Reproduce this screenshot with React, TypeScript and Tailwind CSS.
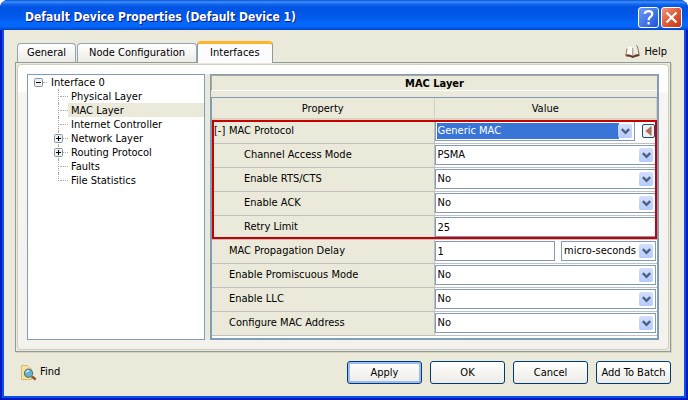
import { useState, type ReactNode } from "react";

function Chevron() {
  return (
    <span className="pointer-events-none absolute top-0.5 right-0.5 bottom-0.5 flex w-3.5 items-center justify-center rounded-xs bg-gradient-to-b from-[#d2dffd] to-[#b5cbfb]">
      <svg width="9" height="7" viewBox="0 0 9 7" aria-hidden="true">
        <path d="M0.8 1.2 L4.5 4.8 L8.2 1.2" fill="none" stroke="#4d6185" strokeWidth="2.4" />
      </svg>
    </span>
  );
}

type DropDownProps = { id?: string; label?: string; options: string[]; selected?: boolean; width?: string };

function DropDown({ id, label, options, selected = false, width = "flex-1" }: DropDownProps) {
  return (
    <span className={`relative flex h-5 border border-[#7f9db9] bg-white p-px ${width}`}>
      <select
        id={id}
        aria-label={label}
        className={`mr-3.5 min-w-0 flex-1 appearance-none pl-px leading-4 outline-none ${selected ? "bg-[#3875d7] text-white" : "bg-white"}`}
      >
        {options.map((o) => (
          <option key={o}>{o}</option>
        ))}
      </select>
      <Chevron />
    </span>
  );
}

function TextBox({ id, value, width = "flex-1" }: { id: string; value: string; width?: string }) {
  return (
    <input
      id={id}
      defaultValue={value}
      className={`h-5 min-w-0 border border-[#7f9db9] bg-white px-0.5 outline-none ${width}`}
    />
  );
}

type RowProps = { id: string; label: string; indent?: string; toggle?: boolean; children: ReactNode };

function Row({ id, label, indent = "pl-[17px]", toggle = false, children }: RowProps) {
  return (
    <tr className="h-6">
      <th
        scope="row"
        className={`border-r border-b border-[#c0c0c0] bg-[#ebe9d9] p-0 text-left font-normal ${toggle ? "pl-0.5" : indent}`}
      >
        <span className="flex">
          {toggle && (
            <button type="button" aria-label="Collapse MAC Protocol" className="w-[15px] text-left">
              [-]
            </button>
          )}
          <label htmlFor={id}>{label}</label>
        </span>
      </th>
      <td className="border-b border-[#c0c0c0] bg-white p-0">
        <div className="flex h-[23px] items-start pt-px pr-px">{children}</div>
      </td>
    </tr>
  );
}

function Expander({ open }: { open: boolean }) {
  return (
    <svg width="9" height="9" viewBox="0 0 9 9" className="relative shrink-0" aria-hidden="true">
      <rect x="0.5" y="0.5" width="8" height="8" rx="1" fill="#f1efe6" stroke="#7898b5" />
      <path d={open ? "M2 4.5h5" : "M2 4.5h5M4.5 2v5"} stroke="#000" />
    </svg>
  );
}

function TreeItem({ name, expandable = false, active = false, last = false }: { name: string; expandable?: boolean; active?: boolean; last?: boolean }) {
  return (
    <li className="flex h-3.5 items-center">
      <span className="relative flex h-3.5 w-3.5 shrink-0 items-center">
        <span className={`absolute top-0 left-1 border-l border-dotted border-[#aca899] ${last ? "h-2" : "h-3.5"}`} />
        <span className="absolute top-[7px] right-0 left-1.5 border-t border-dotted border-[#aca899]" />
        {expandable && <Expander open={false} />}
      </span>
      <button type="button" className={`h-3.5 flex-1 pt-0.5 pl-[3px] text-left leading-3 ${active ? "bg-[#ebe9d9]" : ""}`}>
        {name}
      </button>
    </li>
  );
}

function Tree() {
  return (
    <nav aria-label="Interface tree" className="w-[178px] shrink-0 border border-[#7f9db9] bg-white">
      <div className="flex h-3.5 items-center pl-1.5">
        <Expander open />
        <span className="w-1 border-t border-dotted border-[#aca899]" />
        <button type="button" className="h-3.5 pt-0.5 pl-1 leading-3">Interface 0</button>
      </div>
      <ul className="pl-[26px]">
        <TreeItem name="Physical Layer" />
        <TreeItem name="MAC Layer" active />
        <TreeItem name="Internet Controller" />
        <TreeItem name="Network Layer" expandable />
        <TreeItem name="Routing Protocol" expandable />
        <TreeItem name="Faults" />
        <TreeItem name="File Statistics" last />
      </ul>
    </nav>
  );
}

const columns = (
  <colgroup>
    <col className="w-1/2" />
    <col className="w-1/2" />
  </colgroup>
);

function Properties() {
  return (
    <section className="min-w-0 flex-1 border border-r-2 border-b-2 border-[#7f9db9] bg-white">
      <h2 className="h-4 border-t border-b border-l border-t-[#aca899] border-b-white border-l-[#aca899] bg-[#ebe9d9] text-center text-[11px] leading-4 font-bold">
        MAC Layer
      </h2>
      <div className="h-1.5 bg-[#ebe9d9]" />
      <div className="border-t border-l border-[#7f9db9] pb-0.5">
        <table className="w-full table-fixed border-separate border-spacing-0">
          {columns}
          <thead>
            <tr className="h-[22px] bg-[#ebe9d9]">
              <th scope="col" className="border-r border-b-2 border-r-[#d6d2c2] border-b-[#d6d2c2] p-0 pt-0.5 font-normal">Property</th>
              <th scope="col" className="border-r border-b-2 border-r-[#d6d2c2] border-b-[#d6d2c2] p-0 pt-0.5 font-normal">Value</th>
            </tr>
          </thead>
        </table>
        <div className="relative">
          <table className="w-full table-fixed border-separate border-spacing-0" aria-label="MAC protocol">
            {columns}
            <tbody>
              <Row id="protocol" label="MAC Protocol" toggle>
                <DropDown id="protocol" options={["Generic MAC", "802.11"]} selected />
                <button
                  type="button"
                  aria-label="Reset to default"
                  className="mt-[3px] mr-px ml-[7px] flex h-3.5 w-[13px] items-center justify-center rounded-xs border border-[#1c4a7c] bg-[#f0efe8]"
                >
                  <svg width="7" height="10" viewBox="0 0 7 10" aria-hidden="true">
                    <path d="M6.2 0.6 V9.4 L0.8 5Z" fill="#c8635c" stroke="#8c8880" strokeWidth="0.8" />
                  </svg>
                </button>
              </Row>
              <Row id="access" label="Channel Access Mode" indent="pl-8">
                <DropDown id="access" options={["PSMA", "CSMA"]} />
              </Row>
              <Row id="rts" label="Enable RTS/CTS" indent="pl-8">
                <DropDown id="rts" options={["No", "Yes"]} />
              </Row>
              <Row id="ack" label="Enable ACK" indent="pl-8">
                <DropDown id="ack" options={["No", "Yes"]} />
              </Row>
              <Row id="retry" label="Retry Limit" indent="pl-8">
                <TextBox id="retry" value="25" />
              </Row>
            </tbody>
          </table>
          <div className="pointer-events-none absolute inset-x-0 top-0 bottom-px border-2 border-[#c80000]" />
        </div>
        <table className="w-full table-fixed border-separate border-spacing-0" aria-label="MAC options">
          {columns}
          <tbody>
            <Row id="delay" label="MAC Propagation Delay">
              <TextBox id="delay" value="1" />
              <span className="w-1.5" />
              <DropDown label="Delay unit" options={["micro-seconds", "seconds"]} width="w-[95px]" />
            </Row>
            <Row id="promiscuous" label="Enable Promiscuous Mode">
              <DropDown id="promiscuous" options={["No", "Yes"]} />
            </Row>
            <Row id="llc" label="Enable LLC">
              <DropDown id="llc" options={["No", "Yes"]} />
            </Row>
            <Row id="address" label="Configure MAC Address">
              <DropDown id="address" options={["No", "Yes"]} />
            </Row>
          </tbody>
        </table>
      </div>
    </section>
  );
}

function Tab({ name, active, onSelect }: { name: string; active: boolean; onSelect: () => void }) {
  return (
    <button
      type="button"
      role="tab"
      aria-selected={active}
      onClick={onSelect}
      className={
        active
          ? "relative -mb-px h-[22px] rounded-t-sm border border-t-[3px] border-b-0 border-x-[#919b9c] border-t-[#fdb52e] bg-[#fcfcfe] px-3"
          : "mr-px h-[19px] rounded-t-sm border border-b-0 border-[#91a7b4] bg-gradient-to-b from-white to-[#ecebe6] px-[9px] nth-2:px-[11px] nth-2:mr-0"
      }
    >
      {name}
    </button>
  );
}

function PushButton({ name, primary = false }: { name: string; primary?: boolean }) {
  return (
    <button
      type="button"
      className={`h-[23px] w-[75px] rounded-[3px] border border-[#003c74] bg-gradient-to-b from-white to-[#ecebe6] pt-0.5 ${primary ? "inset-ring-2 inset-ring-[#9ebaf3]" : ""}`}
    >
      {name}
    </button>
  );
}

export default function App() {
  const [tab, setTab] = useState("Interfaces");
  return (
    <main className="flex min-h-screen flex-col overflow-hidden rounded-t-lg bg-[#0019bc] font-['DejaVu_Sans_Condensed','Liberation_Sans',sans-serif] text-[11px] text-black">
      <header className="flex h-[30px] items-center bg-[linear-gradient(180deg,#0a52d6_0px,#3c92fc_2px,#1668ef_4px,#0054e3_7px,#0057e8_16px,#0468fb_23px,#0466f8_27px,#0042c8_30px)] pt-1 pr-[6px] pl-[25px]">
        <h1 className="flex-1 text-[12px] font-bold text-white [text-shadow:1px_1px_#0a1883]">
          Default Device Properties (Default Device 1)
        </h1>
        <div className="flex gap-0.5">
          <button type="button" aria-label="Context help" className="flex size-[21px] items-center justify-center rounded-[3px] border border-white bg-gradient-to-br from-[#6f9cf8] to-[#1d50d8]">
            <svg width="13" height="15" viewBox="0 0 13 15" aria-hidden="true" fill="none" stroke="#fff" strokeWidth="2.2">
              <path d="M2.6 3.9 C3 1.8 4.7 1.2 6.5 1.2 C8.8 1.2 10.3 2.3 10.3 4.1 C10.3 6.7 6.6 6.7 6.6 10.2" />
              <path d="M6.6 12v2.4" />
            </svg>
          </button>
          <button type="button" aria-label="Close" className="flex size-[21px] items-center justify-center rounded-[3px] border border-white bg-gradient-to-br from-[#f0937a] via-[#e35a35] to-[#c5371b]">
            <svg width="13" height="13" viewBox="0 0 13 13" aria-hidden="true">
              <path d="M1.5 1.5l10 10M11.5 1.5l-10 10" stroke="#fff" strokeWidth="2.2" />
            </svg>
          </button>
        </div>
      </header>
      <div className="mx-0.5 mb-0.5 flex flex-1 flex-col border-x-2 border-b-2 border-[#0850ec] bg-[#ebe9d9] pt-[11px] pr-[13px] pl-[11px]">
        <div className="flex h-[21px] items-end">
          <div role="tablist" className="flex items-end pl-0.5">
            {["General", "Node Configuration", "Interfaces"].map((name) => (
              <Tab key={name} name={name} active={tab === name} onSelect={() => setTab(name)} />
            ))}
          </div>
          <button type="button" className="mr-1 mb-0.5 ml-auto flex items-center gap-1">
            <svg width="15" height="14" viewBox="0 0 15 14" aria-hidden="true">
              <path d="M0.3 10.5 L1.8 3.5 L7.5 4.5 L12.8 3.5 L14.7 10.5 L8 12.8Z" fill="#7b4a2c" />
              <path d="M1.2 9.4 L3 1.8 Q5.5 1 7.8 3 V10.8 Q4.5 8.6 1.2 9.4Z" fill="#fdfcf8" />
              <path d="M7.8 3 L11 0.4 L12.5 1.6 L14 9 Q10.5 8.8 7.8 10.8Z" fill="#efece4" />
              <path d="M7.8 3 V10.8" stroke="#8d8373" strokeWidth="0.8" />
              <path d="M11 0.4 L12.5 1.6 L14 9" fill="none" stroke="#6b5d4d" strokeWidth="0.8" />
              <path d="M1 11 Q5 10.2 7.8 12.4 Q10.5 10.4 14.2 10.6" fill="none" stroke="#51362a" />
            </svg>
            Help
          </button>
        </div>
        <div className="border border-[#919b9c] p-px shadow-[1px_1px_#d8d4c3]">
          <div className="flex rounded-sm border border-[#d0cebf] bg-[linear-gradient(180deg,#fefefe_0px,#fdfdfc_27px,#f6f5f2_28px,#f3f2ed_100%)] p-[9px]">
            <Tree />
            <div className="w-[5px] bg-[#ebe9d9]" />
            <Properties />
          </div>
        </div>
        <footer className="flex items-start gap-2 pt-[9px] pl-1.5">
          <button type="button" className="mr-auto flex h-[23px] items-center gap-[3px]">
            <svg width="16" height="16" viewBox="0 0 16 16" aria-hidden="true">
              <path d="M0.5 0.5 H6 L10.5 4 V14.5 H0.5Z" fill="#f5e3a1" stroke="#d8bb6b" />
              <path d="M6 0.5 L10.5 4.5 H7Z" fill="#fffbe8" stroke="#d8bb6b" strokeWidth="0.5" />
              <path d="M11 11.5l3.7 3.2" stroke="#94501e" strokeWidth="2.4" />
              <circle cx="7.5" cy="8.3" r="4.1" fill="#62b5cc" stroke="#66757b" strokeWidth="1.2" />
              <path d="M5.2 7.5 Q6 5.3 8.2 5.6" fill="none" stroke="#d5f4fb" strokeWidth="1.3" />
            </svg>
            Find
          </button>
          <PushButton name="Apply" primary />
          <PushButton name="OK" />
          <PushButton name="Cancel" />
          <PushButton name="Add To Batch" />
        </footer>
      </div>
    </main>
  );
}
